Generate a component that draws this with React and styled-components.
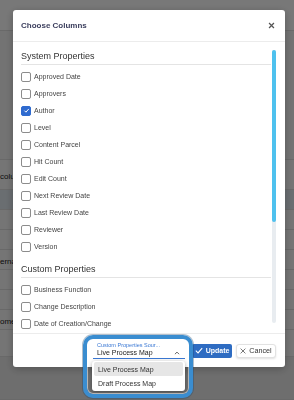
import React, { useState } from "react";
import styled, { createGlobalStyle } from "styled-components";

const systemProps = [
  "Approved Date",
  "Approvers",
  "Author",
  "Level",
  "Content Parcel",
  "Hit Count",
  "Edit Count",
  "Next Review Date",
  "Last Review Date",
  "Reviewer",
  "Version",
];

const customProps = [
  "Business Function",
  "Change Description",
  "Date of Creation/Change",
  "Department",
  "Document Owner",
];

const bgRows = [
  { h: 31, tone: "#fafafa" },
  { h: 129, tone: "#f1f1f1" },
  { h: 30, tone: "#f4f4f4", text: "columns" },
  { h: 20, tone: "#dde5ec" },
  { h: 20, tone: "#f4f4f4" },
  { h: 20, tone: "#f4f4f4" },
  { h: 20, tone: "#f4f4f4", text: "ernal" },
  { h: 20, tone: "#f4f4f4" },
  { h: 20, tone: "#f4f4f4" },
  { h: 20, tone: "#f4f4f4", text: "omer" },
  { h: 27, tone: "#f4f4f4" },
  { h: 43, tone: "#e6e6e6" },
];

const App = () => {
  const [checked, setChecked] = useState({ Author: true });
  const [source, setSource] = useState("Live Process Map");

  const toggle = (name) => {
    setChecked({ ...checked, [name]: !checked[name] });
  };

  const renderItem = (name) => (
    <Item key={name} onClick={() => toggle(name)}>
      <Box checked={!!checked[name]}>
        {checked[name] && (
          <svg width="7" height="7" viewBox="0 0 10 10">
            <path d="M2 5.2 L4.2 7.4 L8.2 2.8" fill="none" stroke="#fff" strokeWidth="1.4" />
          </svg>
        )}
      </Box>
      {name}
    </Item>
  );

  return (
    <>
      <GlobalStyle />
      <Page>
        {bgRows.map((r, i) => (
          <BgRow key={i} h={r.h} tone={r.tone}>
            {r.text}
          </BgRow>
        ))}
      </Page>

      <Overlay>
        <Modal>
          <Header>
            <Title>Choose Columns</Title>
            <svg width="7" height="7" viewBox="0 0 10 10">
              <path d="M1.5 1.5 L8.5 8.5 M8.5 1.5 L1.5 8.5" stroke="#555" strokeWidth="1.8" />
            </svg>
          </Header>

          <Body>
            <List>
              <SectionTitle>System Properties</SectionTitle>
              {systemProps.map(renderItem)}
              <SectionTitle spaced>Custom Properties</SectionTitle>
              {customProps.map(renderItem)}
            </List>
            <Track>
              <Thumb />
            </Track>
          </Body>

          <Footer>
            <SelectGroup>
              <SelectLabel>Custom Properties Sour...</SelectLabel>
              <SelectValue>
                {source}
                <svg width="6" height="4" viewBox="0 0 10 6">
                  <path d="M1.5 5 L5 1.5 L8.5 5" fill="none" stroke="#555" strokeWidth="1.5" />
                </svg>
              </SelectValue>
              <Menu>
                {["Live Process Map", "Draft Process Map"].map((o) => (
                  <MenuItem key={o} active={o === source} onClick={() => setSource(o)}>
                    {o}
                  </MenuItem>
                ))}
              </Menu>
              <Ring />
            </SelectGroup>
            <UpdateButton>
              <svg width="8" height="7" viewBox="0 0 10 8">
                <path d="M1 4.2 L3.8 7 L9 1" fill="none" stroke="#fff" strokeWidth="1.3" />
              </svg>
              Update
            </UpdateButton>
            <CancelButton>
              <svg width="6" height="6" viewBox="0 0 10 10">
                <path d="M1 1 L9 9 M9 1 L1 9" stroke="#444" strokeWidth="1.2" />
              </svg>
              Cancel
            </CancelButton>
          </Footer>
        </Modal>
      </Overlay>
    </>
  );
};

const GlobalStyle = createGlobalStyle`
  body {
    margin: 0;
    font-family: "Liberation Sans", Arial, sans-serif;
    overflow: hidden;
  }
`;

const Page = styled.div`
  width: 294px;
  height: 400px;
  display: flex;
  flex-direction: column;
  background: #f4f4f4;
`;

const BgRow = styled.div`
  height: ${(p) => p.h}px;
  flex-shrink: 0;
  background: ${(p) => p.tone};
  border-bottom: 1px solid #dcdcdc;
  box-sizing: border-box;
  display: flex;
  align-items: center;
  font-size: 8px;
  color: #222;
  white-space: nowrap;
  padding-top: 4px;
`;

const Overlay = styled.div`
  position: fixed;
  inset: 0;
  background: rgba(0, 0, 0, 0.52);
`;

const Modal = styled.div`
  margin: 10px 0 0 13px;
  width: 272px;
  height: 357px;
  background: #fff;
  border-radius: 3px;
  box-shadow: 0 2px 8px rgba(0, 0, 0, 0.25);
  display: flex;
  flex-direction: column;
`;

const Header = styled.div`
  height: 31px;
  flex-shrink: 0;
  display: flex;
  align-items: center;
  justify-content: space-between;
  padding: 0 10px 0 8px;
  border-bottom: 1px solid #ececec;
`;

const Title = styled.div`
  font-size: 8px;
  font-weight: bold;
  color: #3b3e5d;
`;

const Body = styled.div`
  height: 291px;
  flex-shrink: 0;
  display: flex;
  padding-left: 8px;
  overflow: hidden;
`;

const List = styled.div`
  flex: 1;
  overflow: hidden;
  padding-top: 8px;
`;

const SectionTitle = styled.div`
  font-size: 9px;
  line-height: 12px;
  color: #333;
  padding-bottom: 2px;
  margin-top: ${(p) => (p.spaced ? "8px" : "0")};
  margin-bottom: 3px;
  border-bottom: 1px solid #e4e4e4;
`;

const Item = styled.div`
  height: 17px;
  display: flex;
  align-items: center;
  gap: 3px;
  font-size: 7px;
  color: #444;
  cursor: pointer;
`;

const Box = styled.span`
  width: 10px;
  height: 10px;
  box-sizing: border-box;
  border: 1px solid ${(p) => (p.checked ? "#2f6bcf" : "#8c8c8c")};
  background: ${(p) => (p.checked ? "#2f6bcf" : "#fff")};
  border-radius: 2px;
  display: flex;
  align-items: center;
  justify-content: center;
`;

const Track = styled.div`
  width: 4px;
  margin: 8px 9px 10px 1px;
  background: #e8ecf0;
  border-radius: 2px;
`;

const Thumb = styled.div`
  height: 172px;
  background: #4ec1ee;
  border-radius: 2px;
`;

const Footer = styled.div`
  flex: 1;
  display: flex;
  align-items: center;
  justify-content: flex-end;
  padding-right: 9px;
  border-top: 1px solid #ececec;
`;

const SelectGroup = styled.div`
  position: relative;
  width: 92px;
  margin-right: 7px;
  display: flex;
  flex-direction: column;
`;

const SelectLabel = styled.div`
  font-size: 5.5px;
  line-height: 6px;
  color: #3a78d4;
  padding-left: 4px;
`;

const SelectValue = styled.div`
  display: flex;
  align-items: center;
  justify-content: space-between;
  font-size: 7px;
  line-height: 10px;
  color: #222;
  padding: 0 5px 0 4px;
  border-bottom: 1px solid #3a78d4;
`;

const Menu = styled.div`
  position: absolute;
  top: calc(100% + 2px);
  left: -1px;
  width: 93px;
  box-sizing: border-box;
  padding: 1px 2px;
  background: #fff;
  border-radius: 3px;
  box-shadow: 0 1px 4px rgba(0, 0, 0, 0.35);
  z-index: 2;
`;

const MenuItem = styled.div`
  height: 14px;
  display: flex;
  align-items: center;
  padding-left: 4px;
  font-size: 7px;
  color: #333;
  border-radius: 2px;
  background: ${(p) => (p.active ? "#e6e6e6" : "transparent")};
  cursor: pointer;
`;

const Ring = styled.div`
  position: absolute;
  top: -7px;
  left: -10px;
  right: -8px;
  bottom: -39px;
  border: 4px solid #3a8dd0;
  border-radius: 10px;
  box-shadow: 0 0 0 1px rgba(30, 70, 110, 0.35), inset 0 0 0 1px rgba(255, 255, 255, 0.5);
  pointer-events: none;
  z-index: 3;
`;

const UpdateButton = styled.button`
  width: 40px;
  height: 14px;
  padding: 0;
  border: none;
  border-radius: 2px;
  background: #2e6cc2;
  color: #fff;
  font-family: inherit;
  font-size: 7px;
  font-weight: bold;
  display: flex;
  align-items: center;
  justify-content: center;
  gap: 3px;
  margin-right: 4px;
`;

const CancelButton = styled.button`
  width: 40px;
  height: 14px;
  padding: 0;
  border: 1px solid #e2e2e2;
  border-radius: 3px;
  background: #fff;
  color: #333;
  font-family: inherit;
  font-size: 7.2px;
  display: flex;
  align-items: center;
  justify-content: center;
  gap: 3px;
  box-shadow: 0 1px 2px rgba(0, 0, 0, 0.12);
`;

export default App;
